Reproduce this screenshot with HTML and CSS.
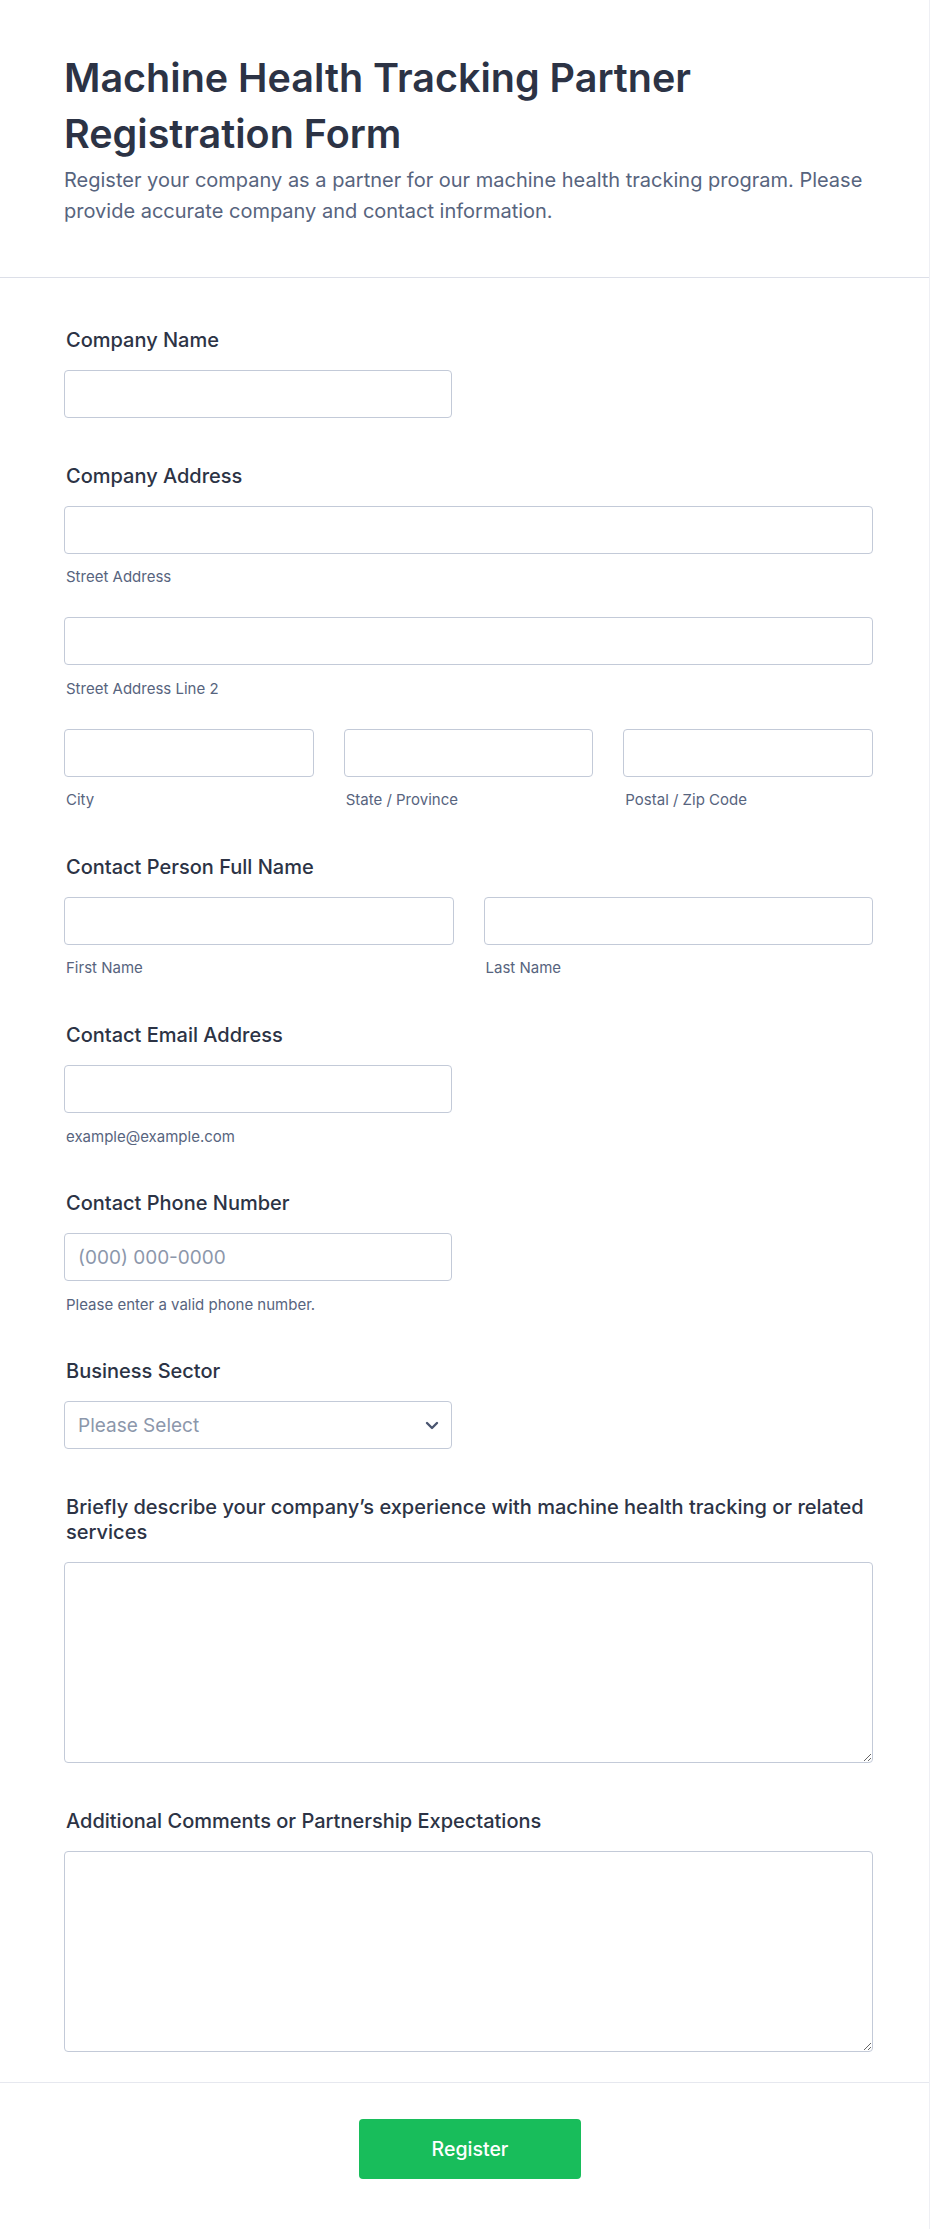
FILE: index.html
```html
<!DOCTYPE html>
<html lang="en">
<head>
<meta charset="utf-8">
<title>Machine Health Tracking Partner Registration Form</title>
<link rel="stylesheet" href="styles.css">
</head>
<body>
<div class="page">
  <header class="form-header">
    <h1 class="form-title">Machine Health Tracking Partner Registration Form</h1>
    <p class="form-subtitle">Register your company as a partner for our machine health tracking program. Please provide accurate company and contact information.</p>
  </header>

  <form class="form-body">
    <div class="field">
      <label class="field-label">Company Name</label>
      <input class="input half" type="text">
    </div>

    <div class="field">
      <label class="field-label">Company Address</label>
      <div class="subrows">
        <div class="sub">
          <input class="input" type="text">
          <span class="sublabel">Street Address</span>
        </div>
        <div class="sub">
          <input class="input" type="text">
          <span class="sublabel">Street Address Line 2</span>
        </div>
        <div class="grid3">
          <div class="sub">
            <input class="input" type="text">
            <span class="sublabel">City</span>
          </div>
          <div class="sub">
            <input class="input" type="text">
            <span class="sublabel">State / Province</span>
          </div>
          <div class="sub">
            <input class="input" type="text">
            <span class="sublabel">Postal / Zip Code</span>
          </div>
        </div>
      </div>
    </div>

    <div class="field">
      <label class="field-label">Contact Person Full Name</label>
      <div class="grid2">
        <div class="sub">
          <input class="input" type="text">
          <span class="sublabel">First Name</span>
        </div>
        <div class="sub">
          <input class="input" type="text">
          <span class="sublabel">Last Name</span>
        </div>
      </div>
    </div>

    <div class="field">
      <label class="field-label">Contact Email Address</label>
      <div class="sub half">
        <input class="input" type="email">
        <span class="sublabel">example@example.com</span>
      </div>
    </div>

    <div class="field">
      <label class="field-label">Contact Phone Number</label>
      <div class="sub half">
        <input class="input" type="tel" placeholder="(000) 000-0000">
        <span class="sublabel">Please enter a valid phone number.</span>
      </div>
    </div>

    <div class="field">
      <label class="field-label">Business Sector</label>
      <div class="select half">
        <span class="select-text">Please Select</span>
        <svg class="chevron" width="14" height="9" viewBox="0 0 14 9" aria-hidden="true">
          <path d="M2 2l5 5 5-5" fill="none" stroke="#4a5570" stroke-width="2.4" stroke-linecap="round" stroke-linejoin="round"/>
        </svg>
      </div>
    </div>

    <div class="field">
      <label class="field-label">Briefly describe your company’s experience with machine health tracking or related services</label>
      <textarea class="textarea"></textarea>
    </div>

    <div class="field">
      <label class="field-label">Additional Comments or Partnership Expectations</label>
      <textarea class="textarea"></textarea>
    </div>
  </form>

  <footer class="form-footer">
    <button class="submit" type="button">Register</button>
  </footer>
</div>
</body>
</html>
```

FILE: styles.css
```css
* { box-sizing: border-box; }

html, body {
  margin: 0;
  padding: 0;
  background: #ffffff;
}

body {
  font-family: Inter, "Noto Sans", "Liberation Sans", sans-serif;
  color: #2c3345;
}

.page {
  width: 930px;
  min-height: 2229px;
  border-right: 1px solid #eeeff4;
  border-bottom: 1px solid #eeeff4;
  background: #ffffff;
}

.form-header {
  padding: 50px 56px 50.5px 64px;
  border-bottom: 1px solid #dcdfe8;
}

.form-title {
  margin: 0 0 2.5px;
  font-size: 39.5px;
  line-height: 56px;
  font-weight: 600;
  color: #2c3345;
}

.form-subtitle {
  margin: 0;
  font-size: 20px;
  line-height: 31px;
  font-weight: 400;
  color: #57647e;
}

.form-body {
  display: flex;
  flex-direction: column;
  gap: 45.7px;
  padding: 50px 56px 30px 64px;
  border-bottom: 1px solid #e6e8ef;
}

.field {
  display: flex;
  flex-direction: column;
}

.field-label {
  display: block;
  padding-left: 2px;
  margin-bottom: 17px;
  font-size: 20px;
  line-height: 25px;
  font-weight: 500;
  color: #2c3345;
}

.input {
  display: block;
  width: 100%;
  height: 48px;
  padding: 0 13px;
  border: 1px solid #c3cad8;
  border-radius: 4px;
  background: #ffffff;
  font-family: inherit;
  font-size: 19px;
  color: #2c3345;
  outline: none;
}

.input::placeholder {
  color: #8c97ab;
}

.half {
  width: 388px;
}

.input.half { width: 388px; }

.subrows {
  display: flex;
  flex-direction: column;
  gap: 31px;
}

.sub {
  display: flex;
  flex-direction: column;
}

.sublabel {
  display: block;
  margin-top: 14.5px;
  padding-left: 2px;
  font-size: 15px;
  line-height: 18px;
  color: #57647e;
}

.grid3 {
  display: grid;
  grid-template-columns: 1fr 1fr 1fr;
  column-gap: 30px;
}

.grid2 {
  display: grid;
  grid-template-columns: 1fr 1fr;
  column-gap: 30px;
}

.select {
  display: flex;
  align-items: center;
  justify-content: space-between;
  height: 48px;
  padding: 0 12px 0 13px;
  border: 1px solid #c3cad8;
  border-radius: 4px;
  background: #ffffff;
}

.select-text {
  font-size: 19px;
  color: #8c97ab;
}

.chevron {
  display: block;
}

.textarea {
  display: block;
  width: 100%;
  height: 201px;
  padding: 10px 13px;
  border: 1px solid #c3cad8;
  border-radius: 4px;
  background: #ffffff;
  font-family: inherit;
  font-size: 19px;
  color: #2c3345;
  resize: vertical;
  outline: none;
}

.form-footer {
  display: flex;
  justify-content: center;
  padding: 36px 56px 50px 67px;
}

.submit {
  width: 222px;
  height: 60px;
  border: none;
  border-radius: 4px;
  background: #18bd5b;
  color: #ffffff;
  font-family: inherit;
  font-size: 19.5px;
  font-weight: 500;
  cursor: pointer;
}
```
